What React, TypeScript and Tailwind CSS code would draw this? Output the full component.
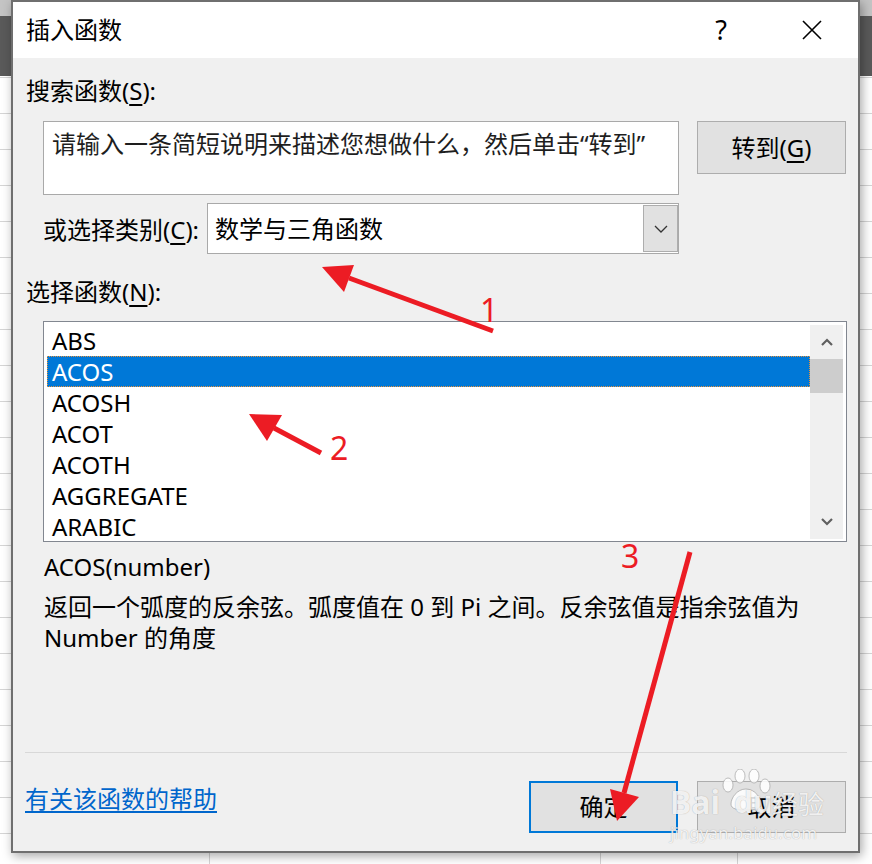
import React from 'react';

const functions = ['ABS', 'ACOS', 'ACOSH', 'ACOT', 'ACOTH', 'AGGREGATE', 'ARABIC'];

function ScrollChevron({ dir }: { dir: 'up' | 'down' }) {
  return (
    <svg width="12" height="8" viewBox="0 0 12 8">
      <path
        d={dir === 'up' ? 'M1 7L6 2L11 7' : 'M1 1L6 6L11 1'}
        fill="none"
        stroke="#606060"
        strokeWidth="2.2"
      />
    </svg>
  );
}

function Annotations() {
  return (
    <svg className="absolute inset-0 pointer-events-none" width="872" height="864" viewBox="0 0 872 864">
      <g stroke="#ec1c24" strokeWidth="5" fill="none">
        <line x1="493" y1="331" x2="349" y2="278" />
        <line x1="321" y1="453" x2="274" y2="428" />
        <line x1="690" y1="552" x2="624" y2="793" />
      </g>
      <g fill="#ec1c24">
        <polygon points="322,267 354,265 344,292" />
        <polygon points="249,414 282,415 267,441" />
        <polygon points="617,821 610,789 639,797" />
        <text x="480" y="322" fontSize="32" fontFamily="Noto Sans, sans-serif">1</text>
        <text x="330" y="460" fontSize="32" fontFamily="Noto Sans, sans-serif">2</text>
        <text x="621" y="568" fontSize="32" fontFamily="Noto Sans, sans-serif">3</text>
      </g>
    </svg>
  );
}

function Watermark() {
  return (
    <div className="absolute left-[668px] top-[766px] w-[165px] h-[82px] pointer-events-none text-white/85 [text-shadow:0_0_1px_rgba(0,0,0,0.35)]">
      <svg className="absolute left-[52px] top-[3px]" width="52" height="42" viewBox="0 0 52 42">
        <g fill="rgba(255,255,255,0.85)" stroke="rgba(150,150,150,0.6)" strokeWidth="1">
          <ellipse cx="8" cy="16" rx="5" ry="7" />
          <ellipse cx="20" cy="7" rx="5" ry="7" />
          <ellipse cx="34" cy="7" rx="5" ry="7" />
          <ellipse cx="45" cy="17" rx="5" ry="7" />
          <path d="M26 20c-9 0-15 9-15 15c0 5 6 6 15 6s15-1 15-6c0-6-6-15-15-15z" />
        </g>
      </svg>
      <span className="absolute left-[2px] top-[18px] text-[32px] leading-[36px] font-bold">Bai</span>
      <span className="absolute left-[66px] top-[18px] text-[30px] leading-[36px] font-bold">du</span>
      <span className="absolute left-[104px] top-[22px] text-[26px] leading-[32px]">经验</span>
      <span className="absolute left-[2px] top-[56px] text-[17px] leading-[22px]">jingyan.baidu.com</span>
    </div>
  );
}

export default function App() {
  return (
    <div className="relative w-[872px] h-[864px] overflow-hidden flex flex-col bg-white text-[24px] text-black font-['Noto_Sans','Noto_Sans_CJK_SC',sans-serif]">
      {/* spreadsheet behind the dialog */}
      <div className="h-[16px] shrink-0 bg-[#c4c4c4]" />
      <div className="h-[60px] shrink-0 bg-[#5a5a5a]" />
      <div className="flex-1 flex bg-[repeating-linear-gradient(to_bottom,transparent_0px,transparent_1px,#d5d5d5_1px,#d5d5d5_2px,transparent_2px,transparent_36px)]">
        <div className="w-[210px] border-r border-[#d5d5d5]" />
        <div className="w-[391px] border-r border-[#d5d5d5]" />
        <div className="w-[137px] border-r border-[#d5d5d5]" />
        <div className="flex-1" />
      </div>

      {/* dialog window */}
      <div className="absolute left-[11px] top-0 w-[849px] h-[853px] border-2 border-[#6f6f6f] bg-[#f0f0f0] flex flex-col shadow-[2px_3px_10px_rgba(0,0,0,0.35)]">
        <div className="h-[56px] shrink-0 bg-white flex items-center pl-[13px]">
          <span className="leading-[30px]">插入函数</span>
          <div className="ml-auto flex items-center h-full">
            <div className="w-[60px] flex justify-center text-[27px] leading-[30px]">?</div>
            <div className="w-[68px] ml-[27px] mr-[12px] flex justify-center">
              <svg width="20" height="20" viewBox="0 0 20 20">
                <path d="M1 1L19 19M19 1L1 19" stroke="#000" strokeWidth="1.6" />
              </svg>
            </div>
          </div>
        </div>

        <div className="flex-1 flex flex-col">
          <div className="pl-[13px] mt-[18px] h-[30px] leading-[30px]">
            搜索函数(<span className="underline underline-offset-4">S</span>):
          </div>

          <div className="flex items-start ml-[30px] mt-[15px]">
            <div className="w-[636px] h-[74px] bg-white border border-[#a9a9a9] pl-[8px] pt-[7px] leading-[30px] text-[#1e1e1e] whitespace-nowrap overflow-hidden">
              请输入一条简短说明来描述您想做什么，然后单击“转到”
            </div>
            <button className="ml-[18px] w-[149px] h-[53px] bg-[#e1e1e1] border border-[#adadad] flex items-center justify-center leading-[30px]">
              转到(<span className="underline underline-offset-4">G</span>)
            </button>
          </div>

          <div className="flex items-center ml-[30px] mt-[8px] h-[51px]">
            <div className="w-[164px] pt-[3px] leading-[30px]">
              或选择类别(<span className="underline underline-offset-4">C</span>):
            </div>
            <div className="w-[472px] h-[51px] bg-white border border-[#a9a9a9] flex p-[1px] pr-0">
              <div className="flex-1 flex items-center pl-[6px] leading-[30px]">数学与三角函数</div>
              <div className="w-[35px] bg-[#e1e1e1] border border-[#adadad] flex items-center justify-center">
                <svg width="14" height="8" viewBox="0 0 14 8">
                  <path d="M1 1L7 7L13 1" fill="none" stroke="#333" strokeWidth="1.3" />
                </svg>
              </div>
            </div>
          </div>

          <div className="pl-[13px] mt-[23px] h-[30px] leading-[30px]">
            选择函数(<span className="underline underline-offset-4">N</span>):
          </div>

          <div className="ml-[30px] mt-[14px] w-[804px] h-[221px] bg-white border border-[#828790] pt-[3px] pb-[2px] pl-[3px] pr-[3px] flex">
            <div className="w-[763px] h-full overflow-hidden">
              {functions.map((name) => {
                const selected = name === 'ACOS';
                return (
                  <div
                    key={name}
                    className={`h-[31px] flex items-center pl-[5px] leading-[30px] ${
                      selected
                        ? 'bg-[#0078d7] text-white outline-1 outline-dotted outline-[#e8923a] -outline-offset-1'
                        : 'text-black'
                    }`}
                  >
                    {name}
                  </div>
                );
              })}
            </div>
            <div className="w-[33px] h-full bg-[#f0f0f0] flex flex-col">
              <div className="h-[34px] flex items-center justify-center">
                <ScrollChevron dir="up" />
              </div>
              <div className="h-[34px] bg-[#cdcdcd]" />
              <div className="flex-1" />
              <div className="h-[34px] flex items-center justify-center">
                <ScrollChevron dir="down" />
              </div>
            </div>
          </div>

          <div className="pl-[31px] mt-[10px] h-[30px] leading-[30px]">ACOS(number)</div>

          <div className="pl-[31px] mt-[9px] leading-[31px]">
            <div>返回一个弧度的反余弦。弧度值在 0 到 Pi 之间。反余弦值是指余弦值为</div>
            <div>Number 的角度</div>
          </div>

          <div className="flex-1" />

          <div className="ml-[12px] w-[822px] h-[1px] bg-[#d8d8d8]" />
          <div className="mt-[28px] mb-[18px] h-[52px] flex pl-[12px] pr-[12px]">
            <a className="self-start mt-[3px] leading-[30px] text-[#0066cc] underline underline-offset-[3px] cursor-pointer">
              有关该函数的帮助
            </a>
            <div className="ml-auto flex gap-[19px]">
              <button className="w-[149px] h-[52px] bg-[#e1e1e1] border-2 border-[#0078d7] flex items-center justify-center leading-[30px]">
                确定
              </button>
              <button className="w-[149px] h-[52px] bg-[#e1e1e1] border border-[#adadad] flex items-center justify-center leading-[30px]">
                取消
              </button>
            </div>
          </div>
        </div>
      </div>

      <Watermark />
      <Annotations />
    </div>
  );
}
